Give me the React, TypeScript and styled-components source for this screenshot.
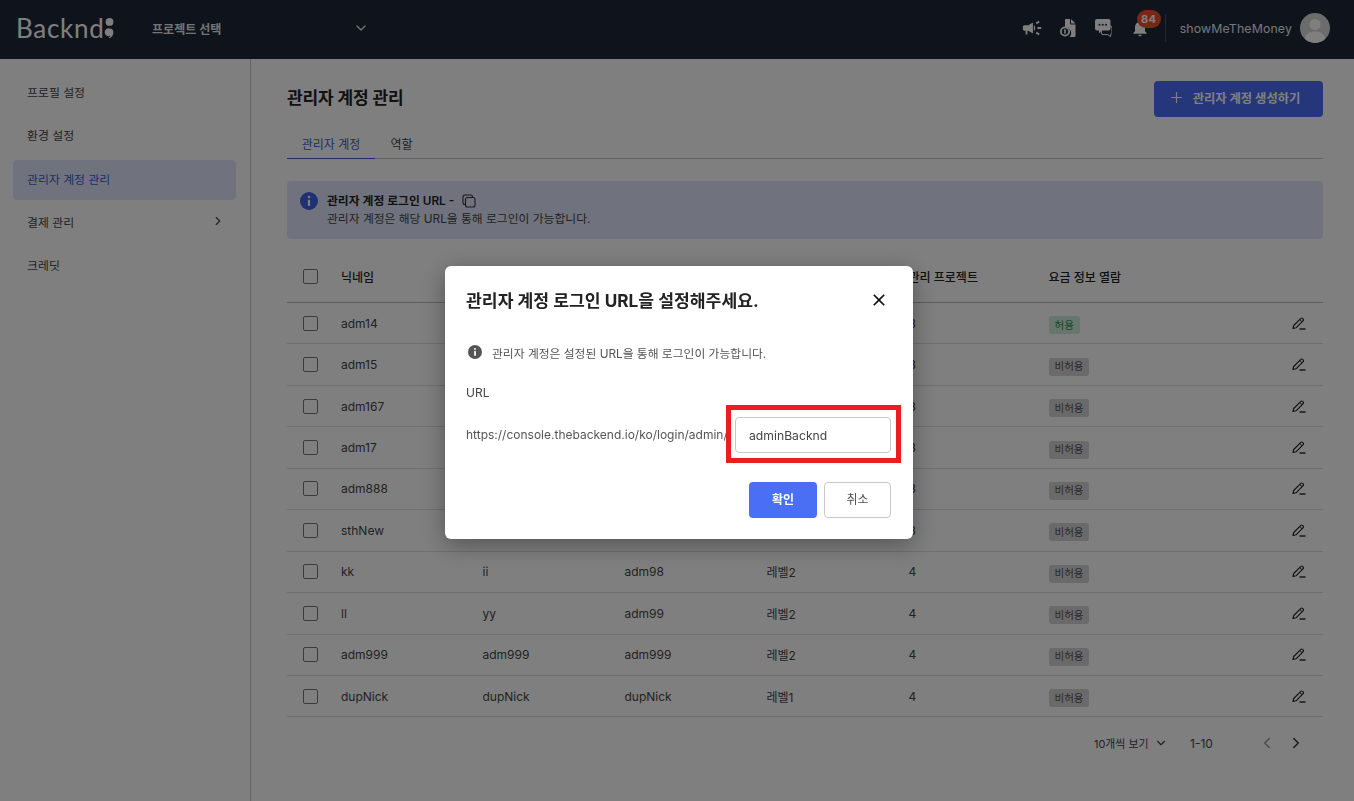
import React from "react";
import styled, { createGlobalStyle } from "styled-components";
import { MdCampaign, MdNotifications, MdClose } from "react-icons/md";
import { ChevronDown, ChevronRight, ChevronLeft, Plus } from "lucide-react";

const Global = createGlobalStyle`
  html, body { margin: 0; padding: 0; height: 100%; background: #fff; overflow: hidden; }
  body { font-family: Inter, "Noto Sans CJK KR", sans-serif; color: #333; font-size: 12px; }
  * { box-sizing: border-box; }
`;

const Page = styled.div`
  width: 1354px; height: 801px; display: flex; flex-direction: column; overflow: hidden;
`;
const Header = styled.header`
  height: 59px; flex: none; background: #1c2638; display: flex; align-items: center; padding: 0 24px 3px 16px; color: #fff;
`;
const Logo = styled.div`
  width: 136px; display: flex; align-items: center; font-family: Lato, sans-serif; font-weight: 400; font-size: 26px;
  letter-spacing: .7px; color: #fff;
`;
const ProjectSelect = styled.div`
  width: 217px; display: flex; align-items: center; justify-content: space-between; font-size: 12px; font-weight: 700;
  color: #e8e8e8; letter-spacing: .05px;
`;
const HeaderRight = styled.div`
  margin-left: auto; display: flex; align-items: center;
`;
const IconSlot = styled.span`
  width: 36px; display: flex; align-items: center; justify-content: center; position: relative; color: #fff;
`;
const Badge = styled.span`
  position: absolute; top: -8px; left: 15px; width: 24px; height: 18px; border-radius: 9px; background: #f04e2e;
  color: #fff; font-size: 11px; font-weight: 700; display: flex; align-items: center; justify-content: center; letter-spacing: .3px;
`;
const Divider = styled.span`
  width: 1px; height: 28px; background: #4a5364; margin: 0 14px 0 7px;
`;
const UserName = styled.span`
  font-size: 12.3px; color: #e8ecf2; letter-spacing: .15px;
`;
const Avatar = styled.span`
  width: 30px; height: 30px; border-radius: 50%; background: #d8d8d8; margin-left: 8px; overflow: hidden; display: flex;
`;
const Body = styled.div`
  flex: 1; display: flex; min-height: 0;
`;
const Sidebar = styled.nav`
  width: 251px; flex: none; border-right: 1px solid #c9c9c9; padding: 14px 14px 0 13px; display: flex; flex-direction: column;
`;
const NavItem = styled.div<{ $active?: boolean }>`
  height: 40px; margin-bottom: 3.3px; padding: 0 11px 3px 14px; display: flex; align-items: center; justify-content: space-between;
  border-radius: 4px; font-size: 11.9px; background: ${p => (p.$active ? "#e0e7fa" : "transparent")};
  color: ${p => (p.$active ? "#3a5cc9" : "#444")};
`;
const Main = styled.main`
  flex: 1; padding: 22px 31px 0 36px; min-width: 0;
`;
const TitleRow = styled.div`
  display: flex; align-items: center; justify-content: space-between; height: 36px;
`;
const Title = styled.h1`
  margin: -6px 0 0; font-size: 17px; font-weight: 700; color: #222; letter-spacing: -.1px;
`;
const PrimaryWide = styled.button`
  width: 169px; height: 36px; border: 0; border-radius: 4px; background: #4a6ff5; color: #fff; font: inherit; font-size: 12.3px;
  font-weight: 700; display: flex; align-items: center; justify-content: center; gap: 8px; padding: 0 9px 3px 0;
`;
const Tabs = styled.div`
  display: flex; border-bottom: 1px solid #c9c9c9; margin-top: 11px; height: 31px;
`;
const Tab = styled.div<{ $active?: boolean }>`
  width: ${p => (p.$active ? "88px" : "53px")}; height: 31px; display: flex; align-items: center; justify-content: center;
  font-size: 12px; color: ${p => (p.$active ? "#3a5cc9" : "#444")};
  border-bottom: ${p => (p.$active ? "1.5px solid #3a5cc9" : "0")};
`;
const Banner = styled.div`
  margin-top: 22px; height: 58px; background: #e0e7fa; border-radius: 4px; padding: 11px 13px; display: flex; gap: 9px;
`;
const BannerText = styled.div`
  display: flex; flex-direction: column; font-size: 11.8px; line-height: 18px; color: #444;
`;
const BannerHead = styled.div`
  display: flex; align-items: center; gap: 8px; font-weight: 600; color: #222;
`;
const Table = styled.div`
  margin-top: 18px;
`;
const Row = styled.div<{ $head?: boolean }>`
  height: ${p => (p.$head ? "46px" : "41.45px")}; display: grid;
  grid-template-columns: 54px 141.5px 142px 142px 142px 140px 243px 1fr;
  align-items: center; border-bottom: 1px solid ${p => (p.$head ? "#bdbdbd" : "#dedede")};
  font-size: 12px; color: ${p => (p.$head ? "#222" : "#444")}; font-weight: ${p => (p.$head ? 500 : 400)};
  padding-bottom: ${p => (p.$head ? "6px" : "0")};
`;
const Check = styled.span`
  width: 15px; height: 15px; margin-left: 16px; border: 1.5px solid #777; border-radius: 2px; background: #fff; display: block;
`;
const Chip = styled.span<{ $ok?: boolean }>`
  display: inline-flex; align-items: center; justify-content: center; height: 18px; padding: 0 6px 2px; border-radius: 3px; font-size: 10.5px;
  margin-top: 4px; background: ${p => (p.$ok ? "#cfeeda" : "#d4d4d4")}; color: ${p => (p.$ok ? "#2e8a5a" : "#555")};
`;
const EditCell = styled.span`
  display: flex; justify-content: flex-start; color: #222;
`;
const Pager = styled.div`
  display: flex; align-items: center; margin-top: 16px; height: 20px; padding-left: 807px; font-size: 10.9px; color: #444;
`;
const PageSize = styled.span`
  display: flex; align-items: center; gap: 6px; width: 96px;
`;
const PageRange = styled.span`
  font-size: 12px; width: 68px;
`;
const PageArrows = styled.span`
  display: flex; gap: 11px;
`;
const Overlay = styled.div`
  position: fixed; inset: 0; background: rgba(0, 0, 0, .5); display: flex; align-items: flex-start; justify-content: center;
  padding: 266px 0 0 4px;
`;
const Modal = styled.div`
  width: 468px; height: 273px; background: #fff; border-radius: 6px; padding: 20px 22px 0 21px; position: relative;
  box-shadow: 0 6px 24px rgba(0, 0, 0, .35); color: #444;
`;
const ModalHead = styled.div`
  display: flex; align-items: center; justify-content: space-between; height: 26px;
`;
const ModalTitle = styled.h2`
  margin: 0; font-size: 17.2px; font-weight: 700; color: #222;
`;
const CloseSlot = styled.span`
  display: flex; margin-right: 2px; margin-top: 2px; color: #111;
`;
const ModalNote = styled.div`
  display: flex; align-items: center; gap: 10px; margin-top: 30px; height: 20px; font-size: 11.8px; padding-left: 2px; color: #555;
`;
const UrlLabel = styled.div`
  margin-top: 23px; font-size: 12px; height: 20px; color: #444;
`;
const UrlRow = styled.div`
  display: flex; align-items: center; justify-content: space-between; margin-top: 12px; font-size: 12px; color: #555;
`;
const UrlText = styled.span`
  margin-top: -2px;
`;
const UrlInput = styled.div`
  width: 156px; height: 36px; border: 1px solid #c9c9c9; border-radius: 4px; display: flex; align-items: center; padding-left: 13px;
  font-size: 12.2px; color: #444;
`;
const ModalActions = styled.div`
  display: flex; justify-content: flex-end; gap: 7px; margin-top: 29px;
`;
const ConfirmBtn = styled.button`
  width: 68px; height: 36px; border: 0; border-radius: 4px; background: #4a6ef4; color: #fff; font: inherit; font-size: 12px; font-weight: 700; padding: 0 0 3px;
`;
const CancelBtn = styled.button`
  width: 67px; height: 36px; border: 1px solid #c9c9c9; border-radius: 4px; background: #fff; color: #555; font: inherit; font-size: 12px; padding: 0 0 3px;
`;
const Highlight = styled.div`
  position: absolute; left: 281px; top: 139px; width: 175px; height: 58px; border: 5px solid #ed1c24; pointer-events: none;
`;

const LogoDots = () => (
  <svg width="13" height="26" viewBox="0 0 14 26" style={{ marginLeft: -1 }}>
    <circle cx="7" cy="6.500" r="4.200" fill="#fff" />
    <path d="M7 13.500a4.200 4.200 0 0 1 4.200 4.200c0 3.400-2 5.600-4.600 6.400l-.5-.8c1-.6 1.600-1.200 1.900-2A4.200 4.200 0 1 1 7 13.500z" fill="#fff" />
  </svg>
);
const FileCoin = () => (
  <svg width="16" height="18" viewBox="0 0 16 18" fill="#fff">
    <path d="M5.500 0H10v4.600a.9.9 0 0 0 .9.9H15.500V17a1 1 0 0 1-1 1H9.600a6 6 0 0 0-4.600-10V.6a.6.6 0 0 1 .5-.6z" />
    <path d="M11 0l4.500 4.500H11z" />
    <circle cx="5" cy="12.500" r="5" />
    <circle cx="5" cy="12.500" r="3.200" fill="#1c2638" />
    <rect x="4.200" y="10.300" width="1.600" height="4.400" />
  </svg>
);
const ChatIcon = () => (
  <svg width="17" height="18" viewBox="0 0 17 18">
    <path d="M5 7h10a2 2 0 0 1 2 2v5c0 1-.7 1.600-1.500 1.600v2.200L13 15.600H7z" fill="none" stroke="#fff" strokeWidth="1" />
    <path d="M2 0h11.500a2 2 0 0 1 2 2v7.500a2 2 0 0 1-2 2H7l-3 3v-3H2a2 2 0 0 1-2-2V2a2 2 0 0 1 2-2z" fill="#fff" />
    <circle cx="4.500" cy="5.700" r="1" fill="#1c2638" /><circle cx="7.700" cy="5.700" r="1" fill="#1c2638" /><circle cx="11" cy="5.700" r="1" fill="#1c2638" />
  </svg>
);
const UserGlyph = () => (
  <svg width="30" height="30" viewBox="0 0 30 30" fill="#fff">
    <circle cx="15" cy="11.500" r="5.500" /><path d="M5 26c0-5 4.500-7.500 10-7.500S25 21 25 26v4H5z" />
  </svg>
);
const InfoIcon = ({ size, color }: { size: number; color: string }) => (
  <svg width={size} height={size} viewBox="0 0 16 16" style={{ flex: "none" }}>
    <circle cx="8" cy="8" r="8" fill={color} />
    <circle cx="8" cy="4.500" r="1.100" fill="#fff" />
    <rect x="7" y="6.800" width="2" height="5.600" rx=".4" fill="#fff" />
  </svg>
);
const CopyIcon = () => (
  <svg width="14" height="14" viewBox="0 0 14 14" fill="none" stroke="#333" strokeWidth="1.100">
    <rect x="3.500" y="3.500" width="9.500" height="9.500" rx="2" />
    <path d="M3 10.500A2 2 0 0 1 1 8.500V3a2 2 0 0 1 2-2h5.500a2 2 0 0 1 2 2" />
  </svg>
);
const PenIcon = () => (
  <svg width="14" height="13" viewBox="0 0 14 13" fill="none" stroke="currentColor">
    <path d="M1 11.500l.7-3L8.900 1.300a1.100 1.100 0 0 1 1.600 0l.7.7a1.100 1.100 0 0 1 0 1.600L4 10.800z" strokeWidth="1.150" strokeLinejoin="round" />
    <path d="M7.800 2.500l2.200 2.200" strokeWidth="1" />
    <path d="M7.500 12h6" strokeWidth="1.400" />
  </svg>
);

const rows: { a: string; b: string; c: string; d: string; e: string; ok?: boolean }[] = [
  { a: "adm14", b: "aa", c: "adm14", d: "레벨2", e: "3", ok: true },
  { a: "adm15", b: "bb", c: "adm15", d: "레벨2", e: "3" },
  { a: "adm167", b: "cc", c: "adm167", d: "레벨2", e: "3" },
  { a: "adm17", b: "dd", c: "adm17", d: "레벨2", e: "3" },
  { a: "adm888", b: "ee", c: "adm888", d: "레벨2", e: "3" },
  { a: "sthNew", b: "ff", c: "sthNew", d: "레벨2", e: "3" },
  { a: "kk", b: "ii", c: "adm98", d: "레벨2", e: "4" },
  { a: "ll", b: "yy", c: "adm99", d: "레벨2", e: "4" },
  { a: "adm999", b: "adm999", c: "adm999", d: "레벨2", e: "4" },
  { a: "dupNick", b: "dupNick", c: "dupNick", d: "레벨1", e: "4" },
];

export default function App() {
  return (
    <>
      <Global />
      <Page>
        <Header>
          <Logo>Backnd<LogoDots /></Logo>
          <ProjectSelect>
            프로젝트 선택
            <ChevronDown size={16} strokeWidth={2} />
          </ProjectSelect>
          <HeaderRight>
            <IconSlot><MdCampaign size={22} /></IconSlot>
            <IconSlot><FileCoin /></IconSlot>
            <IconSlot><ChatIcon /></IconSlot>
            <IconSlot><MdNotifications size={20} /><Badge>84</Badge></IconSlot>
            <Divider />
            <UserName>showMeTheMoney</UserName>
            <Avatar><UserGlyph /></Avatar>
          </HeaderRight>
        </Header>
        <Body>
          <Sidebar>
            <NavItem>프로필 설정</NavItem>
            <NavItem>환경 설정</NavItem>
            <NavItem $active>관리자 계정 관리</NavItem>
            <NavItem>결제 관리<ChevronRight size={14} strokeWidth={2} /></NavItem>
            <NavItem>크레딧</NavItem>
          </Sidebar>
          <Main>
            <TitleRow>
              <Title>관리자 계정 관리</Title>
              <PrimaryWide><Plus size={17} strokeWidth={1.6} />관리자 계정 생성하기</PrimaryWide>
            </TitleRow>
            <Tabs>
              <Tab $active>관리자 계정</Tab>
              <Tab>역할</Tab>
            </Tabs>
            <Banner>
              <InfoIcon size={18} color="#3f63e0" />
              <BannerText>
                <BannerHead>관리자 계정 로그인 URL -<CopyIcon /></BannerHead>
                관리자 계정은 해당 URL을 통해 로그인이 가능합니다.
              </BannerText>
            </Banner>
            <Table>
              <Row $head>
                <Check /><span>닉네임</span><span>이름</span><span>아이디</span><span>권한</span><span>관리 프로젝트</span><span>요금 정보 열람</span><span />
              </Row>
              {rows.map(r => (
                <Row key={r.a}>
                  <Check />
                  <span>{r.a}</span><span>{r.b}</span><span>{r.c}</span><span>{r.d}</span><span>{r.e}</span>
                  <span><Chip $ok={r.ok}>{r.ok ? "허용" : "비허용"}</Chip></span>
                  <EditCell><PenIcon /></EditCell>
                </Row>
              ))}
            </Table>
            <Pager>
              <PageSize>10개씩 보기<ChevronDown size={14} /></PageSize>
              <PageRange>1-10</PageRange>
              <PageArrows>
                <ChevronLeft size={18} color="#999" />
                <ChevronRight size={18} color="#333" />
              </PageArrows>
            </Pager>
          </Main>
        </Body>
      </Page>
      <Overlay>
        <Modal>
          <ModalHead>
            <ModalTitle>관리자 계정 로그인 URL을 설정해주세요.</ModalTitle>
            <CloseSlot><MdClose size={20} /></CloseSlot>
          </ModalHead>
          <ModalNote><InfoIcon size={14} color="#555" />관리자 계정은 설정된 URL을 통해 로그인이 가능합니다.</ModalNote>
          <UrlLabel>URL</UrlLabel>
          <UrlRow>
            <UrlText>https://console.thebackend.io/ko/login/admin/</UrlText>
            <UrlInput>adminBacknd</UrlInput>
          </UrlRow>
          <ModalActions>
            <ConfirmBtn>확인</ConfirmBtn>
            <CancelBtn>취소</CancelBtn>
          </ModalActions>
          <Highlight />
        </Modal>
      </Overlay>
    </>
  );
}
